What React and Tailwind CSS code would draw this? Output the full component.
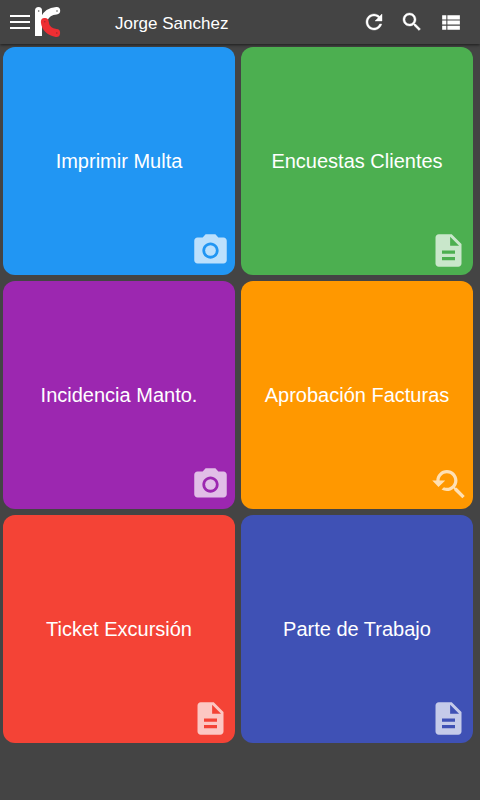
function RefreshIcon({ className }) {
    return (
        <svg viewBox="0 0 24 24" fill="currentColor" className={className}>
            <path
                d="M17.65 6.35C16.2 4.9 14.21 4 12 4c-4.42 0-7.99 3.58-7.99 8s3.57 8 7.99 8c3.73 0 6.84-2.55 7.73-6h-2.08c-.82 2.33-3.04 4-5.65 4-3.31 0-6-2.69-6-6s2.69-6 6-6c1.66 0 3.14.69 4.22 1.78L13 11h7V4l-2.35 2.35z"
                stroke="currentColor"
                strokeWidth="0.4"
            />
        </svg>
    );
}

function SearchIcon({ className }) {
    return (
        <svg viewBox="0 0 24 24" fill="currentColor" className={className}>
            <path
                d="M15.5 14h-.79l-.28-.27C15.41 12.59 16 11.11 16 9.5 16 5.91 13.09 3 9.5 3S3 5.91 3 9.5 5.91 16 9.5 16c1.61 0 3.09-.59 4.23-1.57l.27.28v.79l5 4.99L20.49 19l-4.99-5zm-6 0C7.01 14 5 11.99 5 9.5S7.01 5 9.5 5 14 7.01 14 9.5 11.99 14 9.5 14z"
                stroke="currentColor"
                strokeWidth="0.4"
            />
        </svg>
    );
}

function ViewListIcon({ className }) {
    return (
        <svg viewBox="0 0 24 24" fill="currentColor" className={className}>
            <path d="M4 14h4v-4H4v4zm0 5h4v-4H4v4zM4 9h4V5H4v4zm5 5h12v-4H9v4zm0 5h12v-4H9v4zM9 5v4h12V5H9z" />
        </svg>
    );
}

function CameraIcon({ className }) {
    return (
        <svg viewBox="0 0 24 24" fill="currentColor" className={className}>
            <circle cx="12" cy="12" r="3.3" />
            <path d="M9 2L7.17 4H4c-1.1 0-2 .9-2 2v12c0 1.1.9 2 2 2h16c1.1 0 2-.9 2-2V6c0-1.1-.9-2-2-2h-3.17L15 2H9zm3 15c-2.76 0-5-2.24-5-5s2.24-5 5-5 5 2.24 5 5-2.24 5-5 5z" />
        </svg>
    );
}

function DocumentIcon({ className }) {
    return (
        <svg viewBox="0 0 24 24" fill="currentColor" className={className}>
            <path d="M14 2H6c-1.1 0-1.99.9-1.99 2L4 20c0 1.1.89 2 1.99 2H18c1.1 0 2-.9 2-2V8l-6-6zm2 16H8v-2h8v2zm0-4H8v-2h8v2zm-3-5V3.5L18.5 9H13z" />
        </svg>
    );
}

function SearchAgainIcon({ className }) {
    return (
        <svg viewBox="0 0 24 24" fill="currentColor" className={className}>
            <path d="M17.01 14h-.8l-.27-.27c.98-1.14 1.57-2.61 1.57-4.23 0-3.59-2.91-6.5-6.5-6.5s-6.5 3-6.5 6.5H2l3.84 4 4.16-4H6.51C6.51 7 8.53 5 11.01 5s4.5 2.01 4.5 4.5c0 2.48-2.02 4.5-4.5 4.5-.65 0-1.26-.14-1.82-.38L7.71 15.1c.97.57 2.09.9 3.3.9 1.61 0 3.08-.59 4.22-1.57l.27.27v.79l5.01 4.99L22 19l-4.99-5z" />
        </svg>
    );
}

function Logo() {
    return (
        <svg viewBox="0 0 26 30" className="w-[26px] h-[30px]" fill="none" strokeLinecap="round">
            <path d="M0 29V3.6a3.5 3.5 0 0 1 7 0V29z" fill="#fff" />
            <path d="M21.5 3.7C15.5 4 11 7 8.6 12.5" stroke="#fff" strokeWidth="7.4" />
            <path d="M9.8 15C10.4 21 15 25.4 21.2 26" stroke="#ee2e33" strokeWidth="7.8" />
            <circle cx="3.7" cy="4" r="0.8" fill="#555" />
            <circle cx="22" cy="4" r="0.8" fill="#555" />
            <circle cx="9.8" cy="14.8" r="0.7" fill="#9c2a2e" />
            <circle cx="21.8" cy="26" r="0.8" fill="#9c2a2e" />
        </svg>
    );
}

const tiles = [
    { title: 'Imprimir Multa', color: 'bg-[#2196f3]', Icon: CameraIcon },
    { title: 'Encuestas Clientes', color: 'bg-[#4caf50]', Icon: DocumentIcon },
    { title: 'Incidencia Manto.', color: 'bg-[#9c27b0]', Icon: CameraIcon },
    { title: 'Aprobación Facturas', color: 'bg-[#ff9800]', Icon: SearchAgainIcon },
    { title: 'Ticket Excursión', color: 'bg-[#f44336]', Icon: DocumentIcon },
    { title: 'Parte de Trabajo', color: 'bg-[#3f51b5]', Icon: DocumentIcon },
];

function Tile({ title, color, Icon }) {
    return (
        <button
            type="button"
            className={`relative flex h-[228px] items-center justify-center rounded-[12px] text-xl text-white ${color}`}
        >
            <span>{title}</span>
            <Icon className="absolute right-[5px] bottom-[5px] size-[39px] text-white/70" />
        </button>
    );
}

export default function App() {
    return (
        <div className="min-h-screen bg-[#444] font-['Liberation_Sans',Arial,sans-serif] text-white">
            <header className="flex h-11 items-center pl-[10px] pr-[17px] shadow-[0_1px_3px_rgba(0,0,0,0.6)]">
                <button type="button" aria-label="Menú" className="flex w-[20px] flex-col gap-1">
                    <span className="h-[2px] bg-white" />
                    <span className="h-[2px] bg-white" />
                    <span className="h-[2px] bg-white" />
                </button>
                <div className="ml-[5px]">
                    <Logo />
                </div>
                <h1 className="ml-[54px] mt-[3px] flex-1 text-[17px] leading-6">Jorge Sanchez</h1>
                <div className="flex items-center gap-[14px]">
                    <RefreshIcon className="size-6" />
                    <SearchIcon className="size-6" />
                    <ViewListIcon className="size-[25px]" />
                </div>
            </header>
            <main className="grid grid-cols-2 gap-[6px] pl-[3px] pr-[7px] pt-[3px]">
                {tiles.map((tile) => (
                    <Tile key={tile.title} {...tile} />
                ))}
            </main>
        </div>
    );
}
